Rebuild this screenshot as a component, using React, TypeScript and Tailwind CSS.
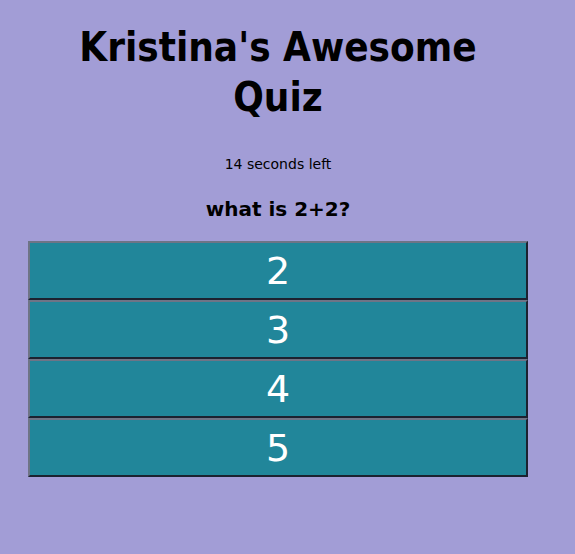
const answers = ['2', '3', '4', '5'];

export default function App() {
    return (
        <div className="min-h-[554px] bg-[#a29dd6] font-['DejaVu_Sans',sans-serif] text-black">
            <div className="ml-[28px] w-[500px] pt-[22px] text-center">
                <h1 className="mx-auto w-[440px] font-['DejaVu_Sans_Condensed','DejaVu_Sans',sans-serif] text-[40px] leading-[50px] font-bold">
                    Kristina's Awesome Quiz
                </h1>
                <p className="mt-[33px] text-[14px] leading-[18px]">14 seconds left</p>
                <h2 className="mt-[24px] text-[20px] leading-[24px] font-bold">what is 2+2?</h2>
                <div className="mt-[20px] flex flex-col">
                    {answers.map((a) => (
                        <button
                            key={a}
                            className="h-[59px] w-[500px] border-2 border-t-[#6e7486] border-r-[#1c2230] border-b-[#1c2230] border-l-[#6e7486] bg-[#21869a] text-[38px] leading-[48px] text-white"
                        >
                            {a}
                        </button>
                    ))}
                </div>
            </div>
        </div>
    );
}
